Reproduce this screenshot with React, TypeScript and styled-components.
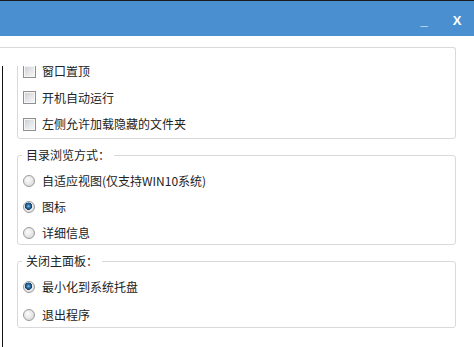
import styled, { createGlobalStyle } from "styled-components";

const GlobalStyle = createGlobalStyle`
  html, body {
    margin: 0;
    padding: 0;
  }
  body {
    width: 474px;
    height: 347px;
    overflow: hidden;
    background: #fff;
    font-family: "Noto Sans CJK SC", "Noto Sans", sans-serif;
    font-size: 12px;
    color: #222;
  }
`;

const BORDER = "#d9d9d9";

const Window = styled.div`
  display: flex;
  flex-direction: column;
  height: 347px;
  box-sizing: border-box;
  border-top: 1px solid #1b1b1b;
`;

const TitleBar = styled.div`
  height: 35px;
  flex: none;
  background: #4a8fd0;
  display: flex;
  justify-content: flex-end;
  align-items: center;
  padding: 3px 2px 0 0;
  box-sizing: border-box;
  gap: 3px;
`;

const TitleButton = styled.span`
  width: 30px;
  text-align: center;
  color: #fff;
  font-family: "Liberation Sans", Arial, sans-serif;
  font-weight: bold;
  font-size: 13px;
  cursor: default;
`;

/* 面板上沿（滚动区域外框） */
const PanelTop = styled.div`
  flex: none;
  height: 18px;
  margin: 11px 18px 0 0;
  border-top: 1px solid ${BORDER};
  border-right: 1px solid ${BORDER};
  border-top-right-radius: 3px;
`;

const ScrollView = styled.div`
  flex: 1;
  min-height: 0;
  overflow: hidden;
  margin-left: 2px;
  border-left: 1px solid #111;
`;

const ScrollContent = styled.div`
  display: flex;
  flex-direction: column;
  margin-top: -20px; /* 已向下滚动 */
  padding: 0 18px 0 14px;
`;

const Box = styled.div`
  display: flex;
  flex-direction: column;
  gap: 10.5px;
  border: 1px solid ${BORDER};
  border-radius: 3px;
  padding: 16px 0 6px 5px;
`;

const Group = styled.fieldset<{ $gap: number; $bottom: number }>`
  display: flex;
  flex-direction: column;
  gap: ${(p) => p.$gap}px;
  margin: 8px 0 0;
  min-width: 0;
  border: 1px solid ${BORDER};
  border-radius: 3px;
  padding: 10px 0 ${(p) => p.$bottom}px 5px;
`;

const Legend = styled.legend`
  margin-left: -1px;
  padding: 0 4px;
  font-size: 12px;
  line-height: 16px;
  color: #222;
`;

const Row = styled.label`
  display: flex;
  align-items: center;
  height: 16px;
  line-height: 16px;
  white-space: nowrap;
`;

const CheckBox = styled.span`
  width: 11px;
  height: 11px;
  margin-right: 6px;
  border: 1px solid #8e8f8f;
  background: linear-gradient(135deg, #c9ccd1 0%, #e6e7e9 55%, #f8f8f8 100%);
  box-shadow: inset 0 0 0 1px #f6f6f6;
  flex: none;
`;

const Radio = styled.span<{ $checked?: boolean }>`
  width: 10px;
  height: 10px;
  margin-right: 7px;
  border: 1px solid #9a9a9a;
  border-radius: 50%;
  flex: none;
  background: ${(p) =>
    p.$checked
      ? "radial-gradient(circle at 45% 42%, #8cc4ec 0, #2f74ad 1.6px, #143f66 3.4px, #e9e9e9 3.9px, #dcdcdc 100%)"
      : "radial-gradient(circle at 40% 38%, #fbfbfb 0, #ececec 40%, #cfcfcf 100%)"};
`;

const Text = styled.span`
  font-size: 12px;
`;

const checks = ["窗口置顶", "开机自动运行", "左侧允许加载隐藏的文件夹"];

const viewModes = [
  { label: "自适应视图(仅支持WIN10系统)", checked: false },
  { label: "图标", checked: true },
  { label: "详细信息", checked: false },
];

const closeModes = [
  { label: "最小化到系统托盘", checked: true },
  { label: "退出程序", checked: false },
];

export default function App() {
  return (
    <>
      <GlobalStyle />
      <Window>
        <TitleBar>
          <TitleButton>_</TitleButton>
          <TitleButton>X</TitleButton>
        </TitleBar>
        <PanelTop />
        <ScrollView>
          <ScrollContent>
            <Box>
              {checks.map((c) => (
                <Row key={c}>
                  <CheckBox />
                  <Text>{c}</Text>
                </Row>
              ))}
            </Box>
            <Group $gap={10} $bottom={3}>
              <Legend>目录浏览方式：</Legend>
              {viewModes.map((m) => (
                <Row key={m.label}>
                  <Radio $checked={m.checked} />
                  <Text>{m.label}</Text>
                </Row>
              ))}
            </Group>
            <Group $gap={11.5} $bottom={4}>
              <Legend>关闭主面板：</Legend>
              {closeModes.map((m) => (
                <Row key={m.label}>
                  <Radio $checked={m.checked} />
                  <Text>{m.label}</Text>
                </Row>
              ))}
            </Group>
          </ScrollContent>
        </ScrollView>
      </Window>
    </>
  );
}
